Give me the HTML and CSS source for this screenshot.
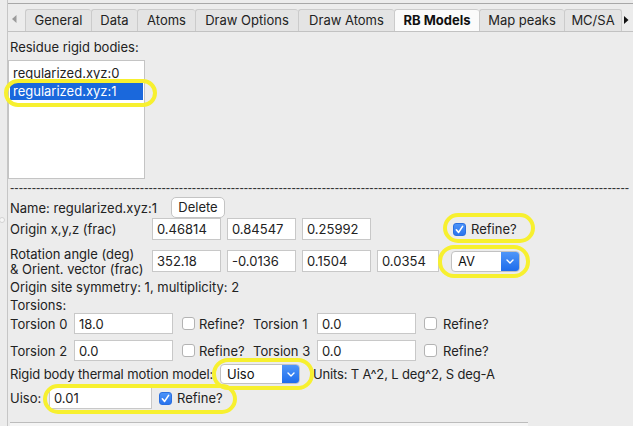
FILE: index.html
```html
<!DOCTYPE html>
<html>
<head>
<meta charset="utf-8">
<link rel="stylesheet" href="styles.css">
</head>
<body>
<div class="window">
  <div class="gutter"><div class="dot"></div></div>
  <div class="main">
    <div class="topline"></div>
    <div class="tabbar">
      <svg class="arrow-left" width="5" height="8" viewBox="0 0 5 8"><polygon points="4.5,0 4.5,8 0,4" fill="#9b9b9b"/></svg>
      <div class="tabs">
        <div class="tab">General</div>
        <div class="tab">Data</div>
        <div class="tab">Atoms</div>
        <div class="tab">Draw Options</div>
        <div class="tab">Draw Atoms</div>
        <div class="tab active">RB Models</div>
        <div class="tab">Map peaks</div>
        <div class="tab">MC/SA</div>
      </div>
      <svg class="arrow-right" width="5" height="8" viewBox="0 0 5 8"><polygon points="0,0 0,8 4.5,4" fill="#111"/></svg>
    </div>
    <div class="content">
      <div class="caption">Residue rigid bodies:</div>
      <div class="listbox">
        <div class="item">regularized.xyz:0</div>
        <div class="item sel">regularized.xyz:1</div>
      </div>
      <div class="dashes">-----------------------------------------------------------------------------------------------------------------------------------------------</div>
      <div class="row name-row">
        <span class="namelbl">Name: regularized.xyz:1</span>
        <span class="button">Delete</span>
      </div>
      <div class="vgrid">
        <div class="glabel">Origin x,y,z (frac)</div>
        <input class="field" value="0.46814">
        <input class="field" value="0.84547">
        <input class="field" value="0.25992">
        <div class="refine grefine"><span class="cb on"><svg width="13" height="13" viewBox="0 0 13 13"><polyline points="3.3,6.8 5.6,9.4 9.6,3.4" fill="none" stroke="#fff" stroke-width="1.6" stroke-linecap="round" stroke-linejoin="round"/></svg></span><span>Refine?</span></div>
        <div class="glabel two">Rotation angle (deg)<br>&amp; Orient. vector (frac)</div>
        <input class="field" value="352.18">
        <input class="field" value="-0.0136">
        <input class="field" value="0.1504">
        <input class="field" value="0.0354">
        <div class="select av"><span class="stext">AV</span><span class="sbtn"><svg width="8" height="5" viewBox="0 0 8 5"><polyline points="1,1 4,4 7,1" fill="none" stroke="#fff" stroke-width="1.4" stroke-linecap="round" stroke-linejoin="round"/></svg></span></div>
      </div>
      <div class="text sym">Origin site symmetry: 1, multiplicity: 2</div>
      <div class="text tors">Torsions:</div>
      <div class="row trow first">
        <span class="tlabel">Torsion 0</span>
        <input class="field tfield" value="18.0">
        <div class="refine tref"><span class="cb"></span><span>Refine?</span></div>
        <span class="tlabel">Torsion 1</span>
        <input class="field tfield" value="0.0">
        <div class="refine tref two"><span class="cb"></span><span>Refine?</span></div>
      </div>
      <div class="row trow second">
        <span class="tlabel">Torsion 2</span>
        <input class="field tfield" value="0.0">
        <div class="refine tref"><span class="cb"></span><span>Refine?</span></div>
        <span class="tlabel">Torsion 3</span>
        <input class="field tfield" value="0.0">
        <div class="refine tref two"><span class="cb"></span><span>Refine?</span></div>
      </div>
      <div class="row thermal">
        <span class="thlabel">Rigid body thermal motion model:</span>
        <div class="select uiso"><span class="stext">Uiso</span><span class="sbtn"><svg width="8" height="5" viewBox="0 0 8 5"><polyline points="1,1 4,4 7,1" fill="none" stroke="#fff" stroke-width="1.4" stroke-linecap="round" stroke-linejoin="round"/></svg></span></div>
        <span class="units">Units: T A^2, L deg^2, S deg-A</span>
      </div>
      <div class="row uisorow">
        <span class="ulabel">Uiso:</span>
        <input class="field ufield" value="0.01">
        <div class="refine uref"><span class="cb on"><svg width="13" height="13" viewBox="0 0 13 13"><polyline points="3.3,6.8 5.6,9.4 9.6,3.4" fill="none" stroke="#fff" stroke-width="1.6" stroke-linecap="round" stroke-linejoin="round"/></svg></span><span>Refine?</span></div>
      </div>
    </div>
    <div class="hscroll"></div>
  </div>
  <div class="hl hl-list"></div>
  <div class="hl hl-refine"></div>
  <div class="hl hl-av"></div>
  <div class="hl hl-model"></div>
  <div class="hl hl-uiso"></div>
</div>
</body>
</html>
```
FILE: styles.css
```css
* { box-sizing: border-box; }
body {
  margin: 0;
  background: #ececec;
  font-family: Inter, "Liberation Sans", Arial, sans-serif;
  font-size: 13px;
  color: #222;
}
.window {
  position: relative;
  width: 633px;
  height: 426px;
  overflow: hidden;
  display: flex;
}
.gutter {
  width: 8px;
  flex: none;
  border-right: 1px solid #c6c6c6;
}
.dot {
  width: 6px;
  height: 6px;
  margin-top: 217px;
  margin-left: -1px;
  border-radius: 50%;
  background: #f6f6f6;
  border: 1px solid #d2d2d2;
}
.main {
  flex: 1;
  min-width: 0;
  display: flex;
  flex-direction: column;
}
.topline {
  height: 1px;
  margin-top: 3px;
  background: #a8a8a8;
}
.tabbar {
  height: 28px;
  display: flex;
  align-items: flex-end;
  border-bottom: 1px solid #c2c2c2;
}
.arrow-left {
  margin-left: 4px;
  margin-right: 8px;
  margin-bottom: 8px;
  flex: none;
}
.arrow-right {
  margin-left: 2px;
  margin-bottom: 7px;
  flex: none;
}
.tabs {
  display: flex;
  height: 22px;
}
.tab {
  height: 22px;
  line-height: 21px;
  text-align: center;
  background: #e4e4e4;
  border: 1px solid #cbcbcb;
  border-bottom: none;
  border-right: none;
  border-radius: 3px 3px 0 0;
  white-space: nowrap;
  color: #222;
}
.tab:nth-child(1) { width: 66px; }
.tab:nth-child(2) { width: 46px; }
.tab:nth-child(3) { width: 58px; }
.tab:nth-child(4) { width: 103px; }
.tab:nth-child(5) { width: 96px; }
.tab:nth-child(6) { width: 85px; }
.tab:nth-child(7) { width: 85px; }
.tab:nth-child(8) { width: 58px; border-right: 1px solid #cbcbcb; }
.tab.active {
  background: #fbfbfb;
  font-weight: bold;
  color: #111;
}
.content {
  padding-left: 2px;
  display: flex;
  flex-direction: column;
}
.caption {
  margin-top: 7px;
  line-height: 16px;
}
.listbox {
  margin-top: 5px;
  margin-left: -2px;
  width: 137px;
  height: 119px;
  background: #fff;
  border: 1px solid #c4c4c4;
  padding: 3px 1px 0 1px;
}
.item {
  height: 18px;
  line-height: 18px;
  padding-left: 3px;
  white-space: nowrap;
  color: #222;
}
.item.sel {
  background: #1a68dc;
  color: #fff;
}
.dashes {
  margin-top: 2px;
  line-height: 14px;
  height: 14px;
  white-space: nowrap;
  font-family: "Liberation Sans", Arial, sans-serif;
  color: #333;
}
.row {
  display: flex;
  align-items: center;
}
.name-row {
  margin-top: 2px;
  height: 21px;
}
.namelbl {
  width: 161px;
  flex: none;
  white-space: nowrap;
}
.button {
  width: 54px;
  height: 21px;
  line-height: 19px;
  text-align: center;
  background: #fff;
  border: 1px solid #c4c4c4;
  border-radius: 5px;
}
.field {
  display: block;
  height: 22px;
  margin: 0;
  padding: 0 0 0 4px;
  border: 1px solid #c8c8c8;
  background: #fff;
  font: inherit;
  color: #222;
  outline: none;
  min-width: 0;
}
.vgrid {
  display: grid;
  grid-template-columns: 136px 69px 69px 69px 62px auto;
  grid-template-rows: 22px 32px;
  column-gap: 6px;
  row-gap: 5px;
  align-items: center;
}
.vgrid .field { width: 100%; }
.glabel { white-space: nowrap; }
.glabel.two {
  line-height: 15px;
  padding-top: 2px;
}
.grefine {
  grid-column: 6;
  margin-left: 8px;
}
.refine {
  display: flex;
  align-items: center;
  white-space: nowrap;
}
.cb {
  width: 13px;
  height: 13px;
  flex: none;
  margin-right: 5px;
  background: #fff;
  border: 1px solid #b3b3b3;
  border-radius: 3px;
  display: flex;
}
.cb.on {
  background: linear-gradient(#4b93f8, #2a74ee);
  border-color: #2a6fe0;
}
.cb.on svg { margin: -1px; }
.select {
  display: flex;
  background: #fff;
  border: 1px solid #c2c2c2;
  border-radius: 4px;
  overflow: hidden;
}
.stext {
  flex: 1;
  padding-left: 6px;
  color: #111;
}
.sbtn {
  width: 18px;
  flex: none;
  background: linear-gradient(#4f96f9, #1e6ceb);
  display: flex;
  align-items: center;
  justify-content: center;
}
.select.av {
  margin-left: 6px;
  width: 69px;
  height: 21px;
  line-height: 19px;
}
.select.uiso {
  width: 80px;
  height: 20px;
  line-height: 18px;
}
.select.uiso .sbtn { width: 17px; }
.text { line-height: 16px; }
.sym { margin-top: 2px; }
.tors { margin-top: 2px; }
.trow { height: 21px; }
.trow .field { height: 21px; }
.trow.second { margin-top: 6px; }
.tlabel {
  width: 64px;
  flex: none;
  white-space: nowrap;
}
.tfield { width: 99px; flex: none; }
.tref {
  width: 71px;
  flex: none;
  margin-left: 9px;
}
.tref .cb { margin-right: 4px; }
.tref.two { margin-left: 8px; }
.tref.two .cb { margin-right: 6px; }
.thermal {
  margin-top: 2px;
  height: 22px;
}
.thlabel {
  width: 210px;
  flex: none;
  white-space: nowrap;
  letter-spacing: -0.1px;
}
.units {
  margin-left: 13px;
  white-space: nowrap;
  letter-spacing: -0.15px;
}
.uisorow {
  margin-top: 2px;
  height: 22px;
}
.ulabel { width: 39px; flex: none; }
.ufield { width: 103px; flex: none; }
.uref { margin-left: 7px; }
.hscroll {
  margin-top: auto;
  margin-left: 2px;
  width: 518px;
  height: 4px;
  flex: none;
  border-top: 1px solid #bcbcbc;
  background: #f5f5f5;
}
.hl {
  position: absolute;
  border: 4px solid #f7f02f;
  border-radius: 17px;
  pointer-events: none;
}
.hl-list { left: 4px; top: 79px; width: 153px; height: 28px; border-radius: 14px; }
.hl-refine { left: 443px; top: 213px; width: 92px; height: 30px; border-radius: 15px; }
.hl-av { left: 438px; top: 245px; width: 92px; height: 33px; border-radius: 16px; }
.hl-model { left: 212px; top: 358px; width: 102px; height: 32px; border-radius: 16px; }
.hl-uiso { left: 43px; top: 384px; width: 194px; height: 30px; border-radius: 15px; }
```
